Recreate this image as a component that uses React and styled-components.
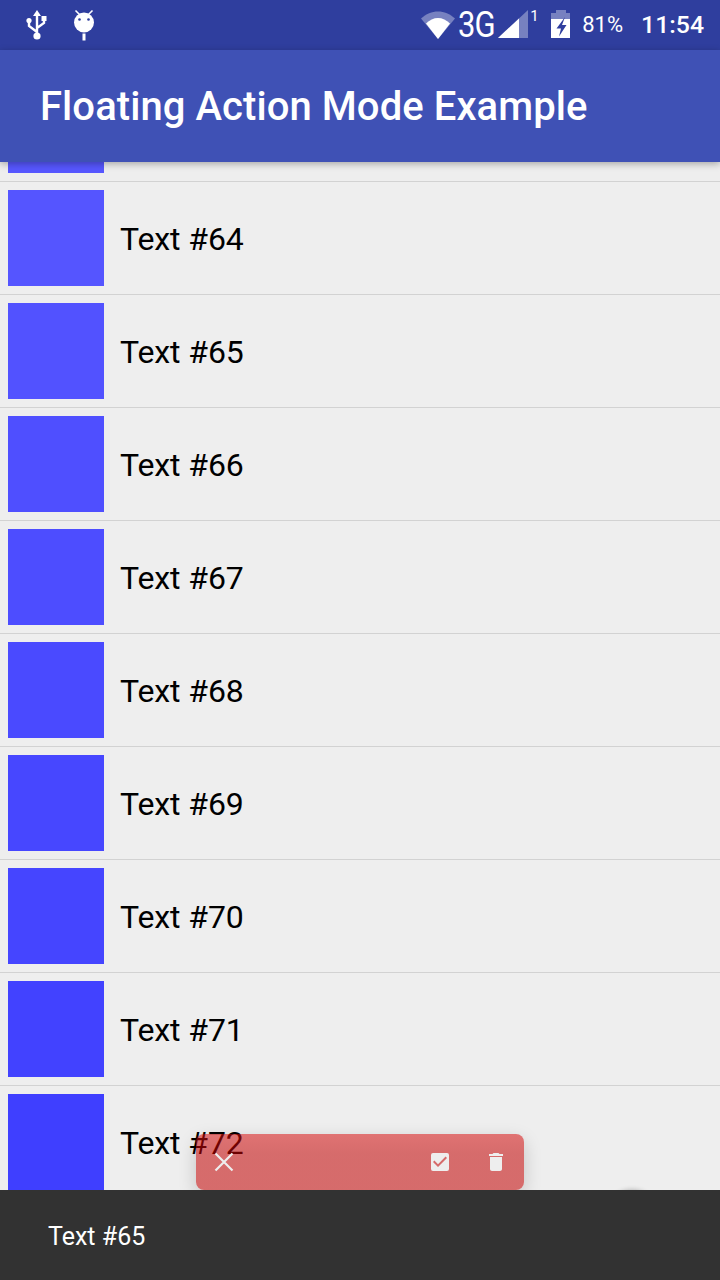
import React from "react";
import styled, { createGlobalStyle } from "styled-components";
import { MdCheckBox, MdDelete } from "react-icons/md";

const GlobalStyle = createGlobalStyle`
html, body {
  margin: 0;
  padding: 0;
  background: #eeeeee;
}
* {
  box-sizing: border-box;
}
`;

const Page = styled.div`
position: relative;
display: flex;
flex-direction: column;
width: 720px;
height: 1280px;
overflow: hidden;
background: #eeeeee;
font-family: Roboto, "Liberation Sans", sans-serif;
`;

const StatusBar = styled.div`
display: flex;
justify-content: space-between;
align-items: center;
flex: none;
height: 50px;
padding: 0 16px 0 26px;
background: #2f3e9e;
color: #ffffff;
`;

const StatusGroup = styled.div`
display: flex;
align-items: center;
height: 50px;
`;

const StatusIcon = styled.svg`
display: block;
flex: none;
height: 50px;
margin-left: ${(p) => p.$gap || 0}px;
`;

const NetworkType = styled.span`
display: block;
width: 36px;
margin-left: 3px;
font-size: 36px;
font-weight: 400;
letter-spacing: -1px;
line-height: 50px;
white-space: nowrap;
transform: scaleX(0.86);
transform-origin: left center;
`;

const SimNumber = styled.span`
align-self: flex-start;
width: 8px;
margin-left: 2px;
margin-top: 7px;
font-size: 15px;
line-height: 18px;
`;

const BatteryText = styled.span`
margin-left: 12px;
font-size: 22px;
line-height: 50px;
`;

const Clock = styled.span`
margin-left: 18px;
font-size: 24.8px;
font-weight: 500;
line-height: 50px;
`;

const AppBar = styled.header`
position: relative;
z-index: 2;
display: flex;
align-items: center;
flex: none;
height: 112px;
padding-left: 40px;
background: #3f51b5;
box-shadow: 0 2px 7px rgba(0, 0, 0, 0.3);
`;

const Title = styled.h1`
margin: 0;
color: #ffffff;
font-size: 40px;
font-weight: 500;
letter-spacing: 0.07px;
white-space: nowrap;
`;

const ListViewport = styled.div`
flex: 1;
overflow: hidden;
`;

const RowList = styled.div`
margin-top: -93px;
`;

const Row = styled.div`
display: flex;
align-items: center;
gap: 16px;
height: 113px;
padding: 8px 8px 9px;
border-bottom: 1px solid #d2d2d2;
`;

const Thumb = styled.div`
flex: none;
width: 96px;
height: 96px;
background: rgb(${(p) => p.$shade}, ${(p) => p.$shade}, 255);
`;

const RowText = styled.span`
padding-top: 2px;
color: #000000;
font-size: 32px;
letter-spacing: -0.1px;
`;

const ActionMode = styled.div`
position: absolute;
left: 196px;
bottom: 90px;
z-index: 3;
display: flex;
align-items: center;
width: 328px;
height: 56px;
border-radius: 8px;
background: linear-gradient(rgba(213, 13, 13, 0.55), rgba(194, 0, 0, 0.55) 20px);
box-shadow: 0 6px 18px rgba(0, 0, 0, 0.18);
`;

const ActionButton = styled.div`
display: flex;
justify-content: center;
align-items: center;
flex: none;
width: 56px;
height: 56px;
color: #eeeeee;
`;

const ActionSpacer = styled.div`
flex: 1;
`;

const HiddenFab = styled.div`
position: absolute;
left: 604px;
bottom: 34px;
z-index: 3;
width: 56px;
height: 56px;
border-radius: 50%;
box-shadow: 0 0 5px rgba(0, 0, 0, 0.3);
`;

const Snackbar = styled.div`
position: relative;
z-index: 4;
display: flex;
align-items: center;
flex: none;
height: 90px;
padding: 2px 0 0 48px;
background: #323232;
color: #ffffff;
font-size: 25px;
`;

const UsbIcon = () => (
  <StatusIcon viewBox="26 0 24 50" width="24">
    <path d="M37 10l-4 6h8z" fill="#fff" />
    <path d="M37 14v22M37 32l-8-6v-5M37 28l7-5v-4" stroke="#fff" strokeWidth="2.4" fill="none" />
    <circle cx="37" cy="36" r="3.6" fill="#fff" />
    <circle cx="29" cy="20.5" r="2.6" fill="#fff" />
    <rect x="41.5" y="16" width="5" height="5" fill="#fff" />
  </StatusIcon>
);

const AndroidIcon = () => (
  <StatusIcon viewBox="69 0 30 50" width="30" $gap={19}>
    <path d="M75.5 10.5l4 4M92.5 10.5l-4 4" stroke="#fff" strokeWidth="1.6" />
    <circle cx="84" cy="22.5" r="10" fill="#fff" />
    <circle cx="79.5" cy="19.5" r="1.3" fill="#2f3e9e" />
    <circle cx="88.5" cy="19.5" r="1.3" fill="#2f3e9e" />
    <rect x="82.5" y="33.5" width="3" height="7" fill="#fff" />
  </StatusIcon>
);

const WifiIcon = () => (
  <StatusIcon viewBox="422 0 34 50" width="34">
    <path d="M422 18.5C432 9 446 9 456 18.5L439 39z" fill="#fff" fillOpacity="0.35" />
    <path d="M427 23.5C434 16 444 16 451 23.5L439 39z" fill="#fff" />
  </StatusIcon>
);

const SignalIcon = () => (
  <StatusIcon viewBox="499 0 30 50" width="30" $gap={4}>
    <path d="M499 38L529 10v28z" fill="#fff" fillOpacity="0.35" />
    <path d="M499 38L520 18.5V38z" fill="#fff" />
  </StatusIcon>
);

const BatteryIcon = () => (
  <StatusIcon viewBox="552 0 19 50" width="19" $gap={13}>
    <path d="M557 10h10v3h4v6h-19v-6h5z" fill="#fff" fillOpacity="0.35" />
    <path d="M552 19h19v19h-19z" fill="#fff" />
    <path d="M566 17l-8.500 11.500h4.500L560 36.500l7.500-11.500H563z" fill="#2f3e9e" />
  </StatusIcon>
);

const CloseIcon = () => (
  <svg width="24" height="24" viewBox="0 0 24 24">
    <path d="M3.500 3.500l17 17M20.500 3.500l-17 17" stroke="#eeeeee" strokeWidth="2.2" fill="none" />
  </svg>
);

const rows = [63, 64, 65, 66, 67, 68, 69, 70, 71, 72];

const App = () => {
  return <Page>
    <GlobalStyle />
    <StatusBar>
      <StatusGroup>
        <UsbIcon />
        <AndroidIcon />
      </StatusGroup>
      <StatusGroup>
        <WifiIcon />
        <NetworkType>3G</NetworkType>
        <SignalIcon />
        <SimNumber>1</SimNumber>
        <BatteryIcon />
        <BatteryText>81%</BatteryText>
        <Clock>11:54</Clock>
      </StatusGroup>
    </StatusBar>

    <AppBar>
      <Title>Floating Action Mode Example</Title>
    </AppBar>

    <ListViewport>
      <RowList>
        {rows.map((n) => (
          <Row key={n}>
            <Thumb $shade={Math.round(255 - n * 2.66)} />
            <RowText>Text #{n}</RowText>
          </Row>
        ))}
      </RowList>
    </ListViewport>

    <ActionMode>
      <ActionButton><CloseIcon /></ActionButton>
      <ActionSpacer />
      <ActionButton><MdCheckBox size={24} /></ActionButton>
      <ActionButton><MdDelete size={24} /></ActionButton>
    </ActionMode>

    <HiddenFab />
    <Snackbar>Text #65</Snackbar>
  </Page>
}

export default App;
